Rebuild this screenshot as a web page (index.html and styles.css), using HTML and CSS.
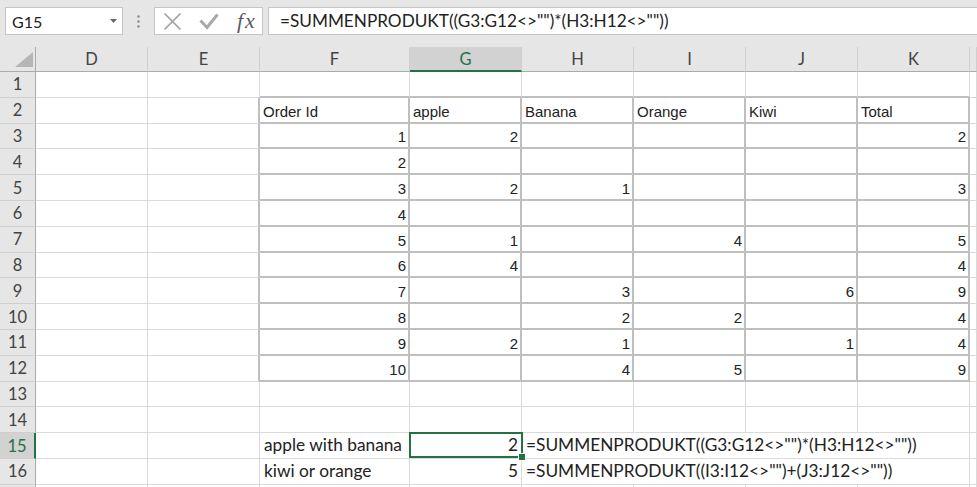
FILE: index.html
```html
<!DOCTYPE html>
<html>
<head>
<meta charset="utf-8">
<link rel="stylesheet" href="styles.css">
</head>
<body>
<div class="fbar">
  <div class="namebox"><span>G15</span><svg class="nb-arrow" width="7" height="4" viewBox="0 0 7 4"><path d="M0 0H7L3.5 4Z" fill="#666"/></svg></div>
  <div class="grip"><svg width="3" height="13" viewBox="0 0 3 13"><circle cx="1.5" cy="1.5" r="1.2" fill="#8a8a8a"/><circle cx="1.5" cy="6.5" r="1.2" fill="#8a8a8a"/><circle cx="1.5" cy="11.5" r="1.2" fill="#8a8a8a"/></svg></div>
  <div class="fbtns">
    <svg class="ic-x" width="19" height="19" viewBox="0 0 19 19"><path d="M1.5 1.5L17.5 17.5M17.5 1.5L1.5 17.5" stroke="#a0a0a0" stroke-width="1.7" fill="none"/></svg>
    <svg class="ic-ok" width="20" height="17" viewBox="0 0 20 17"><path d="M1.5 7.5L8 14.5L18.5 1.5" stroke="#a8a8a8" stroke-width="3" fill="none"/></svg>
    <span class="fx">fx</span>
  </div>
  <div class="finput">=SUMMENPRODUKT((G3:G12&lt;&gt;"")*(H3:H12&lt;&gt;""))</div>
</div>
<div class="sheet">
  <div class="corner"><svg width="18" height="15" viewBox="0 0 18 15"><path d="M18 0V15H0Z" fill="#b5b5b5"/></svg></div>
  <div class="h">D</div><div class="h">E</div><div class="h">F</div><div class="h selc">G</div><div class="h">H</div><div class="h">I</div><div class="h">J</div><div class="h">K</div><div class="h"></div>

  <div class="r">1</div><div class="c"></div><div class="c"></div><div class="c tt"></div><div class="c tt"></div><div class="c tt"></div><div class="c tt"></div><div class="c tt"></div><div class="c tt"></div><div class="c"></div>

  <div class="r">2</div><div class="c"></div><div class="c tl"></div><div class="c t">Order Id</div><div class="c t">apple</div><div class="c t">Banana</div><div class="c t">Orange</div><div class="c t">Kiwi</div><div class="c t">Total</div><div class="c"></div>

  <div class="r">3</div><div class="c"></div><div class="c tl"></div><div class="c t n">1</div><div class="c t n">2</div><div class="c t n"></div><div class="c t n"></div><div class="c t n"></div><div class="c t n">2</div><div class="c"></div>

  <div class="r">4</div><div class="c"></div><div class="c tl"></div><div class="c t n">2</div><div class="c t n"></div><div class="c t n"></div><div class="c t n"></div><div class="c t n"></div><div class="c t n"></div><div class="c"></div>

  <div class="r">5</div><div class="c"></div><div class="c tl"></div><div class="c t n">3</div><div class="c t n">2</div><div class="c t n">1</div><div class="c t n"></div><div class="c t n"></div><div class="c t n">3</div><div class="c"></div>

  <div class="r">6</div><div class="c"></div><div class="c tl"></div><div class="c t n">4</div><div class="c t n"></div><div class="c t n"></div><div class="c t n"></div><div class="c t n"></div><div class="c t n"></div><div class="c"></div>

  <div class="r">7</div><div class="c"></div><div class="c tl"></div><div class="c t n">5</div><div class="c t n">1</div><div class="c t n"></div><div class="c t n">4</div><div class="c t n"></div><div class="c t n">5</div><div class="c"></div>

  <div class="r">8</div><div class="c"></div><div class="c tl"></div><div class="c t n">6</div><div class="c t n">4</div><div class="c t n"></div><div class="c t n"></div><div class="c t n"></div><div class="c t n">4</div><div class="c"></div>

  <div class="r">9</div><div class="c"></div><div class="c tl"></div><div class="c t n">7</div><div class="c t n"></div><div class="c t n">3</div><div class="c t n"></div><div class="c t n">6</div><div class="c t n">9</div><div class="c"></div>

  <div class="r">10</div><div class="c"></div><div class="c tl"></div><div class="c t n">8</div><div class="c t n"></div><div class="c t n">2</div><div class="c t n">2</div><div class="c t n"></div><div class="c t n">4</div><div class="c"></div>

  <div class="r">11</div><div class="c"></div><div class="c tl"></div><div class="c t n">9</div><div class="c t n">2</div><div class="c t n">1</div><div class="c t n"></div><div class="c t n">1</div><div class="c t n">4</div><div class="c"></div>

  <div class="r">12</div><div class="c"></div><div class="c tl"></div><div class="c t n">10</div><div class="c t n"></div><div class="c t n">4</div><div class="c t n">5</div><div class="c t n"></div><div class="c t n">9</div><div class="c"></div>

  <div class="r">13</div><div class="c"></div><div class="c"></div><div class="c"></div><div class="c"></div><div class="c"></div><div class="c"></div><div class="c"></div><div class="c"></div><div class="c"></div>

  <div class="r">14</div><div class="c"></div><div class="c"></div><div class="c"></div><div class="c"></div><div class="c"></div><div class="c"></div><div class="c"></div><div class="c"></div><div class="c"></div>

  <div class="r selr">15</div><div class="c"></div><div class="c"></div><div class="c k">apple with banana</div><div class="c k n active">2<span class="selbox"></span><span class="handle"></span></div><div class="c k wide">=SUMMENPRODUKT((G3:G12&lt;&gt;"")*(H3:H12&lt;&gt;""))</div><div class="c"></div>

  <div class="r">16</div><div class="c"></div><div class="c"></div><div class="c k">kiwi or orange</div><div class="c k n">5</div><div class="c k wide">=SUMMENPRODUKT((I3:I12&lt;&gt;"")+(J3:J12&lt;&gt;""))</div><div class="c"></div>

  <div class="r"></div><div class="c"></div><div class="c"></div><div class="c"></div><div class="c"></div><div class="c"></div><div class="c"></div><div class="c"></div><div class="c"></div><div class="c"></div>
</div>
</body>
</html>
```

FILE: styles.css
```css
html, body {
  margin: 0;
  padding: 0;
}
body {
  width: 977px;
  height: 487px;
  overflow: hidden;
  background: #e6e6e6;
  font-family: Lato, "Noto Sans", sans-serif;
  color: #222;
}

/* formula bar */
.fbar {
  display: flex;
  align-items: flex-start;
  height: 47px;
  box-sizing: border-box;
  padding: 7px 0 0 5px;
  background: #e6e6e6;
}
.namebox {
  width: 118px;
  height: 28px;
  box-sizing: border-box;
  border: 1px solid #c6c6c6;
  background: #fff;
  display: flex;
  align-items: center;
  justify-content: space-between;
  padding: 0 5px 0 6px;
  font-size: 16px;
  color: #222;
}
.grip {
  width: 31px;
  height: 28px;
  display: flex;
  align-items: center;
  justify-content: center;
}
.fbtns {
  width: 109px;
  height: 28px;
  box-sizing: border-box;
  border: 1px solid #c6c6c6;
  background: #fff;
  display: flex;
  align-items: center;
  padding-left: 8px;
}
.ic-ok {
  margin-left: 17px;
}
.fx {
  margin-left: 18px;
  font-family: "Liberation Serif", serif;
  font-style: italic;
  font-size: 22px;
  letter-spacing: 2px;
  color: #5a5a5a;
  line-height: 20px;
}
.finput {
  flex: 1;
  margin-left: 5px;
  height: 28px;
  box-sizing: border-box;
  border: 1px solid #c6c6c6;
  border-right: none;
  background: #fff;
  padding-left: 11px;
  font-size: 17.2px;
  line-height: 26px;
  white-space: nowrap;
  color: #222;
}

/* sheet grid */
.sheet {
  display: grid;
  grid-template-columns: 36px 112px 112px 150px 112px 112px 112px 112px 112px 7px;
  grid-template-rows: 25px repeat(17, 25.8px);
  background: #fff;
}
.corner {
  background: #e6e6e6;
  border-right: 1px solid #ababab;
  border-bottom: 1px solid #ababab;
  box-sizing: border-box;
  display: flex;
  align-items: flex-end;
  justify-content: flex-end;
  padding: 0 2px 4px 0;
}
.h {
  background: #e6e6e6;
  box-sizing: border-box;
  border-right: 1px solid #cfcfcf;
  border-bottom: 1px solid #ababab;
  display: flex;
  align-items: center;
  justify-content: center;
  font-size: 16.5px;
  color: #444;
}
.selc {
  background: #d2d2d2;
  color: #217346;
  border-bottom: 2px solid #217346;
}
.r {
  background: #e6e6e6;
  box-sizing: border-box;
  border-right: 1px solid #ababab;
  border-bottom: 1px solid #cfcfcf;
  display: flex;
  align-items: center;
  justify-content: center;
  font-size: 16.5px;
  color: #444;
}
.selr {
  background: #d2d2d2;
  color: #217346;
  border-right: 2px solid #217346;
}
.c {
  box-sizing: border-box;
  border-right: 1px solid #dadada;
  border-bottom: 1px solid #dadada;
  display: flex;
  align-items: flex-end;
  padding: 0 3px 2px 3px;
  font-family: "Liberation Sans", Arial, sans-serif;
  font-size: 15px;
  line-height: 17px;
  color: #222;
  white-space: nowrap;
}
.n {
  justify-content: flex-end;
}
.t {
  border-right: 2px solid #bfbfbf;
  border-bottom: 2px solid #bfbfbf;
  padding-right: 2px;
}
.tt {
  border-bottom: 2px solid #bfbfbf;
}
.tl {
  border-right: 2px solid #bfbfbf;
}
.k {
  font-family: Lato, "Noto Sans", sans-serif;
  font-size: 17.3px;
  line-height: 20px;
  padding: 0 3px 3px 4px;
}
.wide {
  grid-column: span 4;
}
.active {
  position: relative;
}
.selbox {
  position: absolute;
  left: -1px;
  top: -1px;
  right: -2px;
  bottom: 0;
  border: 2px solid #217346;
}
.handle {
  position: absolute;
  right: -5px;
  bottom: -3px;
  width: 6px;
  height: 6px;
  background: #217346;
  border: 1px solid #fff;
}
```
